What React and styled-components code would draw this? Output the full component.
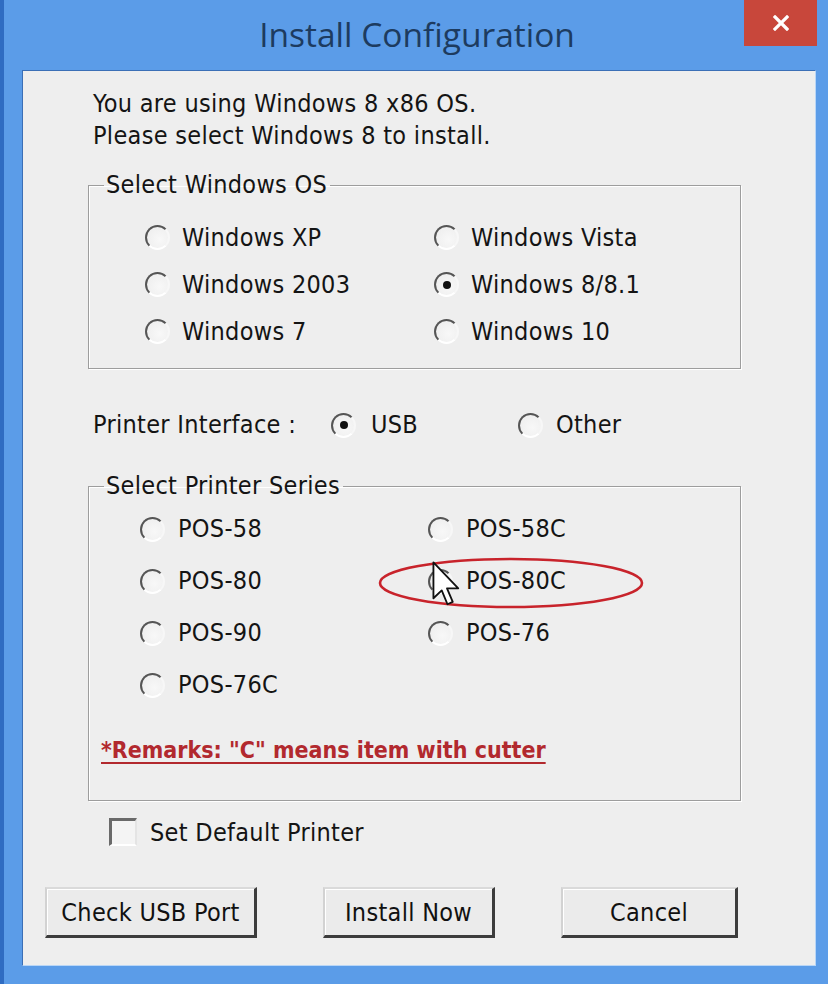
import React from "react";
import styled, { createGlobalStyle } from "styled-components";

const Global = createGlobalStyle`
  html, body { margin: 0; padding: 0; }
  body {
    background: #5b9ce8;
    font-family: "DejaVu Sans Condensed", "Liberation Sans", sans-serif;
    color: #141414;
  }
`;

const Window = styled.div`
  width: 828px;
  height: 984px;
  box-sizing: border-box;
  background: #5b9ce8;
  border-left: 4px solid #2f6cc2;
  overflow: hidden;
`;

const TitleBar = styled.div`
  position: relative;
  height: 70px;
  display: flex;
  align-items: flex-start;
  justify-content: center;
`;

const Title = styled.div`
  font-family: "Open Sans", "Noto Sans", sans-serif;
  font-size: 33.5px;
  line-height: 70px;
  margin-top: -1px;
  color: #1d3b5f;
  padding-left: 2px;
`;

const CloseButton = styled.div`
  position: absolute;
  top: 0;
  right: 11px;
  width: 73px;
  height: 46px;
  background: #c8473b;
  display: flex;
  align-items: center;
  justify-content: center;
`;

const Client = styled.div`
  margin-left: 18px;
  width: 794px;
  height: 896px;
  box-sizing: border-box;
  background: #eeeeee;
  border-top: 1px solid #3b6fb6;
  border-left: 1px solid #3b6fb6;
  border-right: 1px solid #b9d6f6;
  border-bottom: 1px solid #b9d6f6;
  padding-top: 17px;
  display: flex;
  flex-direction: column;
  font-size: 25px;
  letter-spacing: 0.3px;
`;

const Intro = styled.div`
  margin-left: 70px;
  line-height: 32px;
`;

const Group = styled.fieldset`
  margin: ${(p) => p.$mt}px 0 0 65px;
  width: 653px;
  box-sizing: border-box;
  height: ${(p) => p.$h}px;
  padding: ${(p) => p.$pt}px 0 0 0;
  border: 1px solid #9d9d9d;
  box-shadow: inset 1px 1px 0 #ffffff, 1px 1px 0 #ffffff;
  min-inline-size: 0;
`;

const Legend = styled.legend`
  margin-left: 15px;
  padding: 0 3px 0 2px;
  line-height: 28px;
  font-size: 25px;
`;

const OptionGrid = styled.div`
  position: relative;
  margin-left: ${(p) => p.$ml}px;
  display: grid;
  grid-template-columns: ${(p) => p.$col}px ${(p) => p.$col}px;
  grid-auto-rows: ${(p) => p.$row}px;
  align-items: center;
`;

const Option = styled.label`
  display: flex;
  align-items: center;
  gap: ${(p) => p.$gap || 12}px;
  width: ${(p) => (p.$w ? `${p.$w}px` : "auto")};
  line-height: 30px;
`;

const Radio = styled.span`
  position: relative;
  flex: none;
  width: 25px;
  height: 25px;
  box-sizing: border-box;
  border-radius: 50%;
  border: 2px solid;
  border-color: #555555 #f7f7f7 #ffffff #555555;
  background: radial-gradient(circle at 60% 60%, #f8f8f8 0%, #ececec 100%);
  &::after {
    content: "";
    display: ${(p) => (p.$checked ? "block" : "none")};
    position: absolute;
    left: 50%;
    top: 50%;
    width: 8px;
    height: 8px;
    margin: -4px 0 0 -4px;
    border-radius: 50%;
    background: #111;
  }
`;

const InterfaceRow = styled.div`
  margin: 40px 0 0 70px;
  height: 32px;
  display: flex;
  align-items: center;
`;

const InterfaceLabel = styled.span`
  width: 238px;
  line-height: 32px;
`;

const Remarks = styled.div`
  margin: 24px 0 0 12px;
  line-height: 30px;
  font-weight: bold;
  font-size: 23px;
  letter-spacing: 0;
  color: #b2292e;
  text-decoration: underline;
  text-underline-offset: 4px;
`;

const CheckRow = styled.label`
  margin: 15px 0 0 86px;
  height: 32px;
  display: flex;
  align-items: center;
  gap: 13px;
`;

const CheckBox = styled.span`
  width: 28px;
  height: 28px;
  box-sizing: border-box;
  border-top: 3px solid #6a6a6a;
  border-left: 3px solid #6a6a6a;
  border-right: 2px solid #e4e4e4;
  border-bottom: 2px solid #ffffff;
  background: #f4f4f4;
`;

const ButtonRow = styled.div`
  margin: 39px 0 0 22px;
  display: flex;
  gap: 66px;
`;

const Button = styled.button`
  width: ${(p) => p.$w}px;
  height: 51px;
  box-sizing: border-box;
  font-family: "DejaVu Sans Condensed", "Liberation Sans", sans-serif;
  font-size: 25px;
  letter-spacing: 0.3px;
  color: #111;
  background: #ebebeb;
  border-top: 2px solid #dadada;
  border-left: 2px solid #d2d2d2;
  border-right: 3px solid #3c3c3c;
  border-bottom: 3px solid #3c3c3c;
  box-shadow: inset 1px 1px 0 #ffffff;
  padding: 0;
`;

const Ellipse = styled.svg`
  position: absolute;
  left: 238px;
  top: 54px;
  overflow: visible;
`;

const Cursor = styled.svg`
  position: absolute;
  left: 292px;
  top: 58px;
`;

const osOptions = [
  ["Windows XP", false],
  ["Windows Vista", false],
  ["Windows 2003", false],
  ["Windows 8/8.1", true],
  ["Windows 7", false],
  ["Windows 10", false],
];

const series = ["POS-58", "POS-58C", "POS-80", "POS-80C", "POS-90", "POS-76", "POS-76C"];

export default function App() {
  return (
    <>
      <Global />
      <Window>
        <TitleBar>
          <Title>Install Configuration</Title>
          <CloseButton>
            <svg width="16" height="16" viewBox="0 0 16 16">
              <path d="M2 2 L14 14 M14 2 L2 14" stroke="#ffffff" strokeWidth="3.2" strokeLinecap="square" />
            </svg>
          </CloseButton>
        </TitleBar>
        <Client>
          <Intro>
            You are using Windows 8 x86 OS.
            <br />
            Please select Windows 8 to install.
          </Intro>

          <Group $mt={19} $h={198} $pt={15}>
            <Legend>Select Windows OS</Legend>
            <OptionGrid $ml={56} $col={289} $row={47}>
              {osOptions.map(([name, checked]) => (
                <Option key={name}>
                  <Radio $checked={checked} />
                  {name}
                </Option>
              ))}
            </OptionGrid>
          </Group>

          <InterfaceRow>
            <InterfaceLabel>Printer Interface :</InterfaceLabel>
            <Option $w={187} $gap={15}>
              <Radio $checked />
              USB
            </Option>
            <Option $gap={13}>
              <Radio />
              Other
            </Option>
          </InterfaceRow>

          <Group $mt={31} $h={329} $pt={3}>
            <Legend>Select Printer Series</Legend>
            <OptionGrid $ml={51} $col={288} $row={52}>
              {series.map((s) => (
                <Option key={s} $gap={13}>
                  <Radio />
                  {s}
                </Option>
              ))}
              <Ellipse width="266" height="52" viewBox="0 0 266 52">
                <ellipse cx="133" cy="26" rx="131" ry="24" fill="none" stroke="#c8232b" strokeWidth="2.6" />
              </Ellipse>
              <Cursor width="30" height="46" viewBox="0 0 13 20">
                <path
                  d="M0.6 0.6 L0.6 16.2 L4.2 12.8 L6.7 18.8 L9 17.8 L6.5 11.9 L11.4 11.9 Z"
                  fill="#ffffff"
                  stroke="#111111"
                  strokeWidth="0.8"
                  strokeLinejoin="round"
                />
              </Cursor>
            </OptionGrid>
            <Remarks>*Remarks: "C" means item with cutter</Remarks>
          </Group>

          <CheckRow>
            <CheckBox />
            Set Default Printer
          </CheckRow>

          <ButtonRow>
            <Button $w={212}>Check USB Port</Button>
            <Button $w={172}>Install Now</Button>
            <Button $w={177}>Cancel</Button>
          </ButtonRow>
        </Client>
      </Window>
    </>
  );
}
